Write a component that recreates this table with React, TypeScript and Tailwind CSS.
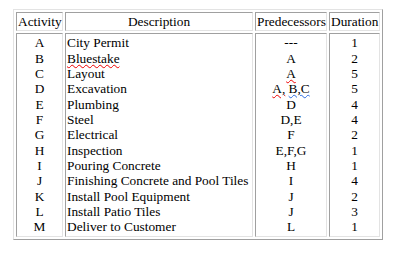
const rows = [
  ['A', 'City Permit', '---', '1'],
  ['B', 'Bluestake', 'A', '2'],
  ['C', 'Layout', 'A', '5'],
  ['D', 'Excavation', 'A, B,C', '5'],
  ['E', 'Plumbing', 'D', '4'],
  ['F', 'Steel', 'D,E', '4'],
  ['G', 'Electrical', 'F', '2'],
  ['H', 'Inspection', 'E,F,G', '1'],
  ['I', 'Pouring Concrete', 'H', '1'],
  ['J', 'Finishing Concrete and Pool Tiles', 'I', '4'],
  ['K', 'Install Pool Equipment', 'J', '2'],
  ['L', 'Install Patio Tiles', 'J', '3'],
  ['M', 'Deliver to Customer', 'L', '1'],
];

const cell =
  'border border-t-[#a0a0a0] border-l-[#a0a0a0] border-b-[#e3e3e3] border-r-[#e3e3e3] p-px font-normal whitespace-nowrap';

const red = 'underline decoration-wavy decoration-[#e00] decoration-1 underline-offset-[1px]';
const blue = 'underline decoration-wavy decoration-[#2b6be0] decoration-1 underline-offset-[1px]';

function Pred({ value, i }: { value: string; i: number }) {
  // Word's spell checker left squiggles on a few entries.
  if (i === 2) return <span className={red}>A</span>;
  if (i === 3)
    return (
      <span>
        <span className={red}>A,</span> <span className={blue}>B,C</span>
      </span>
    );
  return <span>{value}</span>;
}

export default function App() {
  return (
    <div className="min-h-screen bg-white pl-[13px] pt-[9px] text-black font-['Liberation_Serif','Times_New_Roman',serif] text-[13.33px] leading-[15.33px]">
      <table className="table-fixed w-[370px] border-separate border-spacing-[2px] border border-t-[#e3e3e3] border-l-[#e3e3e3] border-r-[#a0a0a0] border-b-[#a0a0a0]">
        <thead>
          <tr>
            <th className={`${cell} w-[47px]`}>Activity</th>
            <th className={`${cell} w-[188px]`}>Description</th>
            <th className={`${cell} w-[72px]`}>Predecessors</th>
            <th className={`${cell} w-[51px]`}>Duration</th>
          </tr>
        </thead>
        <tbody>
          <tr>
            <td className={`${cell} text-center`}>
              {rows.map((r) => (
                <div key={r[0]}>{r[0]}</div>
              ))}
            </td>
            <td className={`${cell} text-left`}>
              {rows.map((r, i) => (
                <div key={r[0]}>
                  {i === 1 ? <span className={red}>{r[1]}</span> : r[1]}
                </div>
              ))}
            </td>
            <td className={`${cell} text-center`}>
              {rows.map((r, i) => (
                <div key={r[0]}>
                  <Pred value={r[2]} i={i} />
                </div>
              ))}
            </td>
            <td className={`${cell} text-center`}>
              {rows.map((r) => (
                <div key={r[0]}>{r[3]}</div>
              ))}
            </td>
          </tr>
        </tbody>
      </table>
    </div>
  );
}
